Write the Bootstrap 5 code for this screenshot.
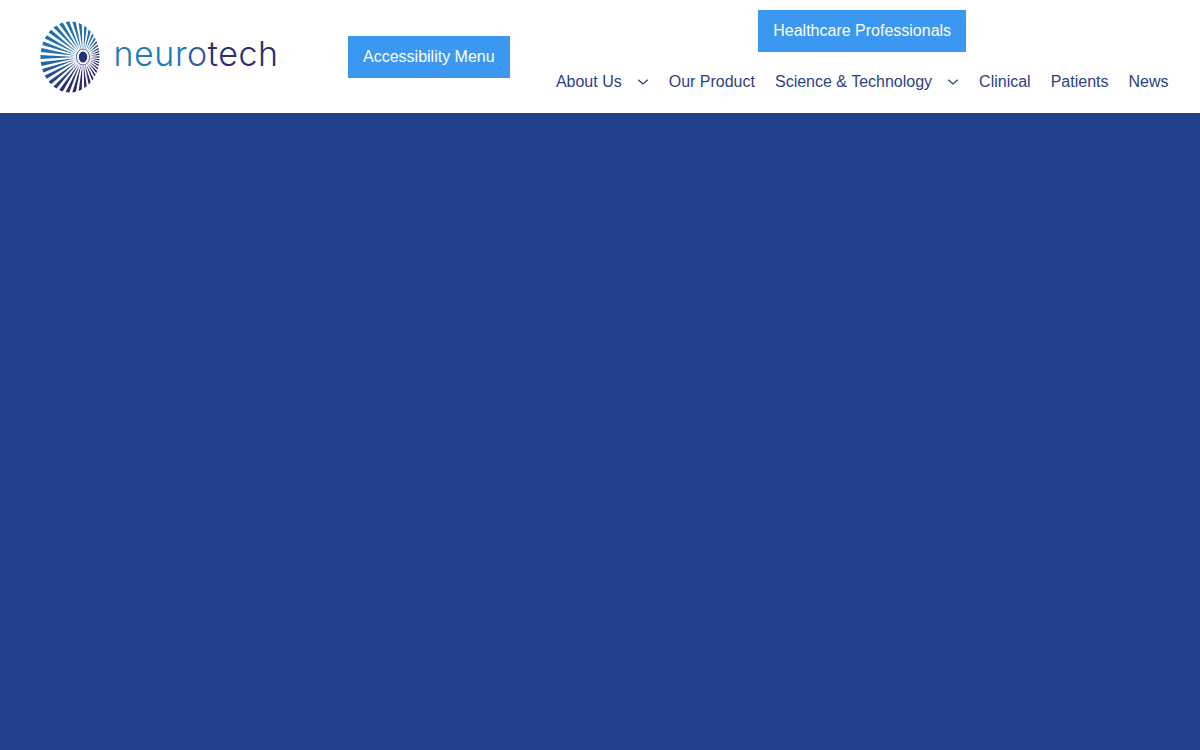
<!DOCTYPE html>
<html lang="en">
<head>
    <meta charset="UTF-8">
    <meta name="viewport" content="width=device-width, initial-scale=1.0">
    <title>Neurotech</title>
    <link href="https://cdn.jsdelivr.net/npm/bootstrap@5.3.0/dist/css/bootstrap.min.css" rel="stylesheet">
    <style>
        body { font-family: "Liberation Sans", Arial, sans-serif; font-size: 16px; background: #23408c; }
        .site-head { height: 113px; background: #fff; padding-left: 40px; padding-right: 21.5px; }
        .site-logo { width: 308px; margin-top: 21px; text-decoration: none; }
        .logo-word { font-family: Inter, sans-serif; font-weight: 300; font-size: 34px; line-height: 1; letter-spacing: 0.55px; margin-left: 13.5px; margin-top: 16px; }
        .w1 { color: #1f7ab8; }
        .w2 { color: #2a5f9f; }
        .w3 { color: #29306f; }
        .cta-btn { background: #3b97f0; color: #fff; border: 0; border-radius: 0; padding: 0 15px; height: 42px; line-height: 42px; font-size: 16px; }
        .cta-btn:hover { background: #3b97f0; color: #fff; }
        .access-btn { margin-top: 36px; }
        .head-right { padding-top: 10px; }
        .main-nav { margin-top: 18px; }
        .main-nav .nav-link { color: #2b4285; padding: 0 10px; line-height: 24px; display: flex; align-items: center; }
        .nav-caret { margin-left: 15px; }
    </style>
</head>
<body>
    <header class="site-head d-flex justify-content-between">
        <div class="d-flex align-items-start">
            <a class="site-logo d-flex align-items-start" href="#">
                <svg id="logoMark" width="60" height="72" viewBox="40 21 60 72"></svg>
                <span class="logo-word"><span class="w1">neur</span><span class="w2">o</span><span class="w3">tech</span></span>
            </a>
            <a class="btn cta-btn access-btn" href="#">Accessibility Menu</a>
        </div>
        <div class="head-right d-flex flex-column align-items-center">
            <a class="btn cta-btn" href="#">Healthcare Professionals</a>
            <ul class="nav main-nav flex-nowrap">
                <li class="nav-item">
                    <a class="nav-link" href="#">About Us
                        <svg class="nav-caret" width="12" height="12" viewBox="0 0 12 12"><path d="M1.2 3.8 6 8l4.8-4.2" fill="none" stroke="#2b4285" stroke-width="1.3"/></svg>
                    </a>
                </li>
                <li class="nav-item"><a class="nav-link" href="#">Our Product</a></li>
                <li class="nav-item">
                    <a class="nav-link" href="#">Science &amp; Technology
                        <svg class="nav-caret" width="12" height="12" viewBox="0 0 12 12"><path d="M1.2 3.8 6 8l4.8-4.2" fill="none" stroke="#2b4285" stroke-width="1.3"/></svg>
                    </a>
                </li>
                <li class="nav-item"><a class="nav-link" href="#">Clinical</a></li>
                <li class="nav-item"><a class="nav-link" href="#">Patients</a></li>
                <li class="nav-item"><a class="nav-link" href="#">News</a></li>
            </ul>
        </div>
    </header>

    <script src="https://cdn.jsdelivr.net/npm/bootstrap@5.3.0/dist/js/bootstrap.bundle.min.js"></script>
    <script>
        // Draw the sunburst logo: wedges from the eye out to an offset ellipse
        const cx = 83, cy = 57, ox = 70, oy = 57, rx = 29.5, ry = 35.5;
        const count = 38;
        let out = '';

        function edge(a) {
            const dx = Math.cos(a), dy = Math.sin(a);
            const A = dx * dx / (rx * rx) + dy * dy / (ry * ry);
            const B = 2 * ((cx - ox) * dx / (rx * rx));
            const C = (cx - ox) * (cx - ox) / (rx * rx) - 1;
            return (-B + Math.sqrt(B * B - 4 * A * C)) / (2 * A);
        }

        for (let i = 0; i < count; i++) {
            const a = i / count * Math.PI * 2;
            const half = Math.PI / count * 0.55;
            const r0 = 7;
            const r1 = edge(a - half), r2 = edge(a + half);
            const p = [
                [cx + Math.cos(a) * r0, cy + Math.sin(a) * r0],
                [cx + Math.cos(a - half) * r1, cy + Math.sin(a - half) * r1],
                [cx + Math.cos(a + half) * r2, cy + Math.sin(a + half) * r2]
            ].map(q => q[0].toFixed(1) + ',' + q[1].toFixed(1)).join(' ');
            // blue at the upper left, navy at the bottom and right
            const x = Math.cos(a), y = Math.sin(a);
            const t = Math.max(0, Math.min(1, 0.55 + y * 0.75 + x * 0.5));
            const c = [31 + t * 10, 112 - t * 70, 172 - t * 60].map(Math.round).join(',');
            out += `<polygon points="${p}" fill="rgb(${c})"/>`;
        }
        out += `<ellipse cx="${cx}" cy="${cy}" rx="7.2" ry="8.6" fill="#fff"/>`;
        out += `<ellipse cx="${cx}" cy="${cy}" rx="6.6" ry="8" fill="none" stroke="#2b3f86" stroke-width="0.8"/>`;
        out += `<ellipse cx="${cx}" cy="${cy}" rx="4.2" ry="5.6" fill="#232f78"/>`;
        document.getElementById('logoMark').innerHTML = out;
    </script>
</body>
</html>
